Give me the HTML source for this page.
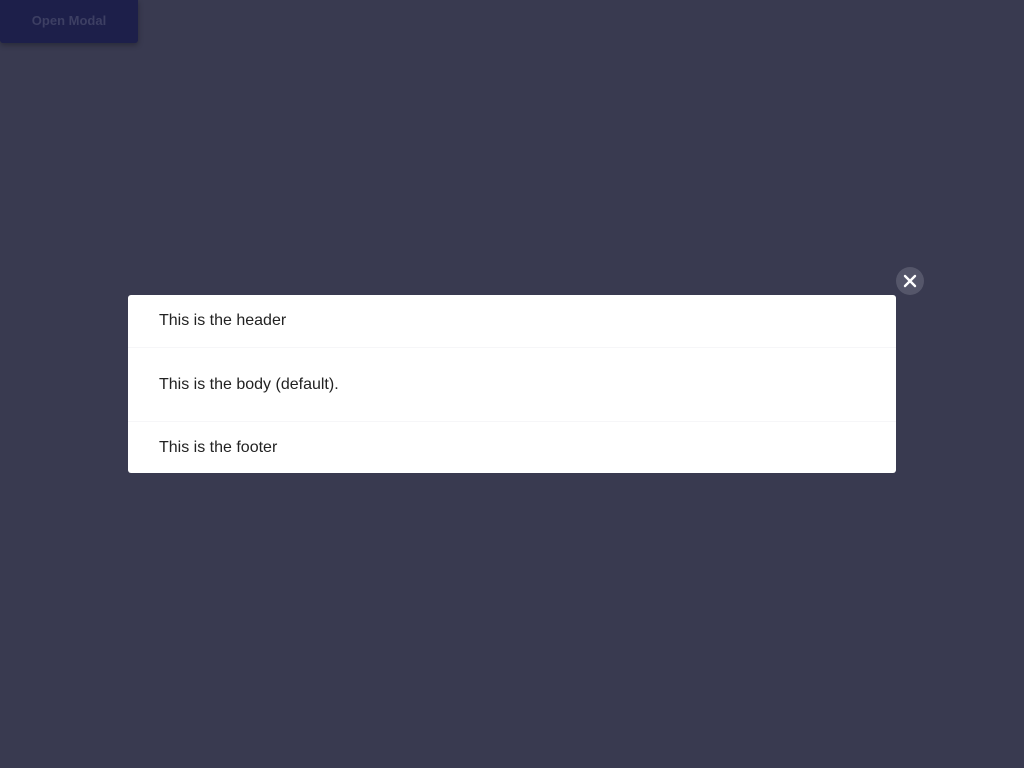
<!DOCTYPE html>
<html><head><style>
body{margin:0;width:1024px;height:768px;background:#393a50;font-family:"Liberation Sans",sans-serif;position:relative;overflow:hidden}
.btn{position:absolute;left:0;top:0;width:138px;height:43px;background:#1d1f4a;border-radius:0 0 3px 3px;box-shadow:0 2px 6px rgba(0,0,0,.3);color:#3d3f63;font-size:13px;font-weight:bold;text-align:center;line-height:41px}
.modal{position:absolute;left:128px;top:295px;width:768px;height:178px;background:#fff;border-radius:3px;color:#222;font-size:16px}
.s{position:absolute;left:31px}
.line{position:absolute;left:0;right:0;height:1px;background:#f6f6f8}
.x{position:absolute;left:896px;top:267px;width:28px;height:28px;border-radius:50%;background:#55566a}
</style></head><body>
<div class="btn">Open Modal</div>
<div class="modal">
<div class="s" style="top:17px">This is the header</div>
<div class="line" style="top:52px"></div>
<div class="s" style="top:81px">This is the body (default).</div>
<div class="line" style="top:126px"></div>
<div class="s" style="top:144px">This is the footer</div>
</div>
<div class="x"><svg width="28" height="28"><path d="M9 9L19 19M19 9L9 19" stroke="#fff" stroke-width="2.4" stroke-linecap="round"/></svg></div>
</body></html>
